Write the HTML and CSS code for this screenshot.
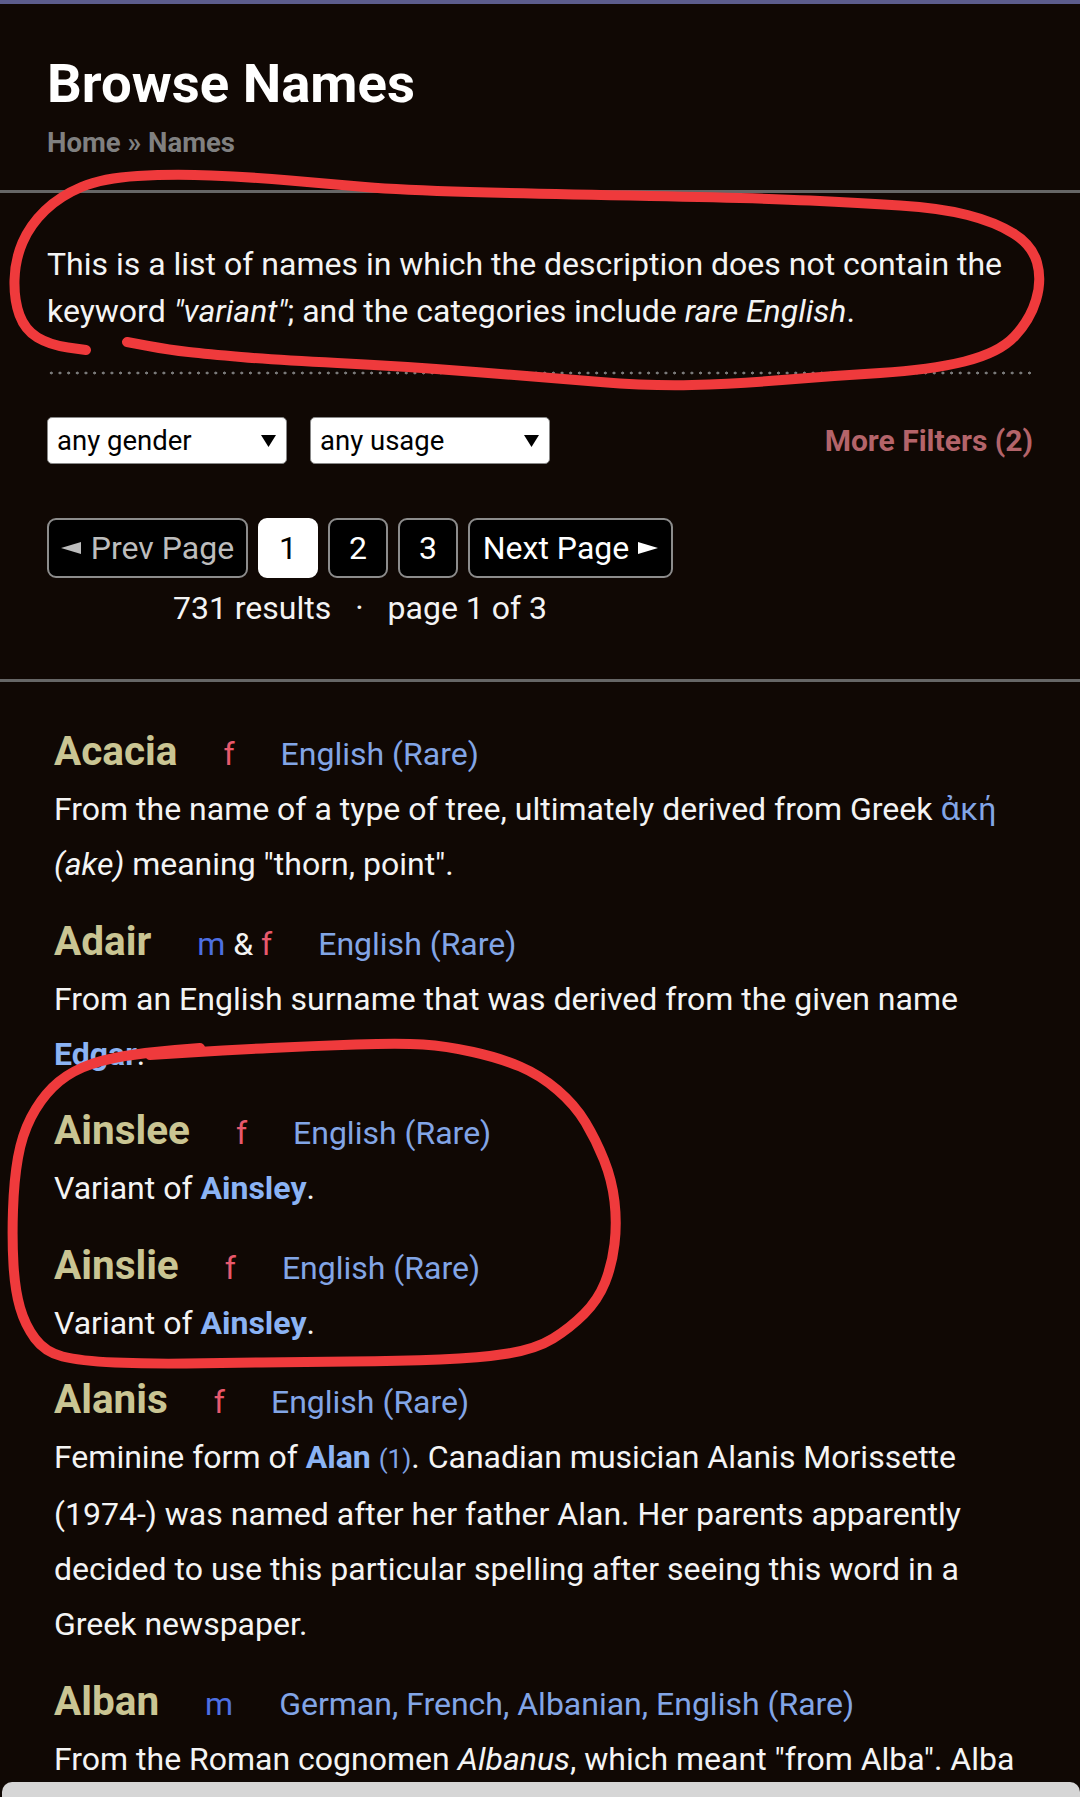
FILE: index.html
```html
<!DOCTYPE html>
<html lang="en">
<head>
<meta charset="utf-8">
<title>Browse Names</title>
<link rel="stylesheet" href="styles.css">
</head>
<body>
<div class="topbar"></div>
<header class="header">
  <h1 class="title">Browse Names</h1>
  <div class="crumbs"><span>Home</span> <span class="raquo">»</span> <span>Names</span></div>
</header>
<div class="rule"></div>

<section class="intro">
  <p class="intro-text">This is a list of names in which the description does not contain the keyword <i>"variant"</i>; and the categories include <i>rare English</i>.</p>
  <div class="dotted"></div>

  <div class="filters">
    <div class="select"><span>any gender</span><svg class="arrow" viewBox="0 0 15 12" width="15" height="12"><polygon points="0,0 15,0 7.5,12" fill="#000"/></svg></div>
    <div class="select"><span>any usage</span><svg class="arrow" viewBox="0 0 15 12" width="15" height="12"><polygon points="0,0 15,0 7.5,12" fill="#000"/></svg></div>
    <div class="more">More Filters (2)</div>
  </div>

  <div class="pager">
    <div class="pages">
      <div class="btn btn-prev"><svg viewBox="0 0 20 12" width="20" height="12"><polygon points="0,6 20,0 20,12" fill="currentColor"/></svg><span>Prev Page</span></div>
      <div class="btn btn-num current">1</div>
      <div class="btn btn-num">2</div>
      <div class="btn btn-num">3</div>
      <div class="btn btn-next"><span>Next Page</span><svg viewBox="0 0 20 12" width="20" height="12"><polygon points="0,0 20,6 0,12" fill="currentColor"/></svg></div>
    </div>
    <div class="results"><span>731 results</span><span class="dot">·</span><span>page 1 of 3</span></div>
  </div>
</section>
<div class="rule rule2"></div>

<main class="list">
  <div class="entry">
    <div class="name-row"><span class="name">Acacia</span><span class="tags"><span class="gender"><span class="f">f</span></span><span class="usage">English (Rare)</span></span></div>
    <div class="desc">From the name of a type of tree, ultimately derived from Greek <span class="greek">ἀκή</span> <i>(ake)</i> meaning "thorn, point".</div>
  </div>
  <div class="entry">
    <div class="name-row"><span class="name">Adair</span><span class="tags"><span class="gender"><span class="m">m</span> &amp; <span class="f">f</span></span><span class="usage">English (Rare)</span></span></div>
    <div class="desc">From an English surname that was derived from the given name <b class="link">Edgar</b>.</div>
  </div>
  <div class="entry">
    <div class="name-row"><span class="name">Ainslee</span><span class="tags"><span class="gender"><span class="f">f</span></span><span class="usage">English (Rare)</span></span></div>
    <div class="desc">Variant of <b class="link">Ainsley</b>.</div>
  </div>
  <div class="entry">
    <div class="name-row"><span class="name">Ainslie</span><span class="tags"><span class="gender"><span class="f">f</span></span><span class="usage">English (Rare)</span></span></div>
    <div class="desc">Variant of <b class="link">Ainsley</b>.</div>
  </div>
  <div class="entry">
    <div class="name-row"><span class="name">Alanis</span><span class="tags"><span class="gender"><span class="f">f</span></span><span class="usage">English (Rare)</span></span></div>
    <div class="desc">Feminine form of <b class="link">Alan</b> <span class="sup">(1)</span>. Canadian musician Alanis Morissette (1974-) was named after her father Alan. Her parents apparently decided to use this particular spelling after seeing this word in a Greek newspaper.</div>
  </div>
  <div class="entry">
    <div class="name-row"><span class="name">Alban</span><span class="tags"><span class="gender"><span class="m">m</span></span><span class="usage">German, French, Albanian, English (Rare)</span></span></div>
    <div class="desc">From the Roman cognomen <i>Albanus</i>, which meant "from Alba". Alba (from Latin <i>albus</i> "white") was the name of several places.</div>
  </div>
</main>

<svg class="marks" viewBox="0 0 1080 1797" width="1080" height="1797">
  <path d="M127,342 L148.5,346 Q170,350 188.5,352 Q207,354 241,357 Q275,360 337.5,363 Q400,366 475.5,372 Q551,378 600.5,382 Q650,386 692,385 Q734,384 782,380 Q830,376 880,373 Q930,370 964.5,361.5 Q999,353 1014.5,336.5 Q1030,320 1036,300 Q1042,280 1037,262.5 Q1032,245 1013.5,233.5 Q995,222 967.5,215 Q940,208 900,205.5 Q860,203 810,200.5 Q760,198 650,196 Q540,194 470,192 Q400,190 365,187 Q330,184 290,180.5 Q250,177 211,175.5 Q172,174 137.5,176 Q103,178 81.5,187 Q60,196 45,210.5 Q30,225 22.5,242.5 Q15,260 14.5,280 Q14,300 19.5,315 Q25,330 37.5,337.5 Q50,345 68,347.5 L86,350"/>
  <path d="M150,1055 L190,1052.5 Q230,1050 271,1048 Q312,1046 356,1044.5 Q400,1043 423,1044.5 Q446,1046 473,1052 Q500,1058 520,1066.5 Q540,1075 557.5,1090 Q575,1105 585.5,1122.5 Q596,1140 604,1160 Q612,1180 614.5,1201.5 Q617,1223 614.5,1244 Q612,1265 605,1282.5 Q598,1300 584,1314 Q570,1328 553,1338.5 Q536,1349 508,1353.5 Q480,1358 440,1359.5 Q400,1361 350,1361.5 Q300,1362 261.5,1362.5 Q223,1363 186.5,1363.5 Q150,1364 115,1362.5 Q80,1361 62.5,1356.5 Q45,1352 35,1338.5 Q25,1325 20,1307.5 Q15,1290 13.5,1265 Q12,1240 13,1210 Q14,1180 18,1157.5 Q22,1135 31,1117.5 Q40,1100 52.5,1087.5 Q65,1075 82.5,1067.5 Q100,1060 125,1056 Q150,1052 175,1050 L200,1048"/>
</svg>

<div class="navbar"></div>
</body>
</html>
```

FILE: styles.css
```css
html, body {
  margin: 0;
  padding: 0;
}

html {
  overflow: hidden;
}

body {
  position: relative;
  height: 1797px;
  overflow: hidden;
  background: #100804;
  color: #f4f4f4;
  font-family: Roboto, "Noto Sans", "DejaVu Sans", sans-serif;
}

.topbar {
  height: 4px;
  background: #5c5c8c;
}

.header {
  padding: 0 47px;
}

.title {
  margin: 47px 0 0;
  font-size: 54.5px;
  line-height: 64px;
  font-weight: 700;
  color: #ffffff;
}

.crumbs {
  margin-top: 10px;
  font-size: 27.5px;
  line-height: 36px;
  font-weight: 700;
  color: #808080;
}

.rule {
  height: 3px;
  background: #666666;
  margin-top: 29px;
}

.intro {
  padding: 0 47px;
}

.intro-text {
  margin: 48px 0 0;
  font-size: 32px;
  line-height: 47px;
}

.dotted {
  margin-top: 36px;
  height: 4px;
  background-image: radial-gradient(circle, #7a7a7a 1.3px, transparent 1.7px);
  background-size: 8.67px 4px;
  background-repeat: repeat-x;
}

.filters {
  margin-top: 42px;
  display: flex;
  align-items: center;
  gap: 23px;
}

.select {
  box-sizing: border-box;
  width: 240px;
  height: 47px;
  display: flex;
  align-items: center;
  justify-content: space-between;
  padding: 0 10px 0 9px;
  background: #ffffff;
  border: 1px solid #888888;
  border-radius: 5px;
  color: #000000;
  font-size: 27.5px;
}

.more {
  margin-left: auto;
  color: #b4646a;
  font-size: 30px;
  font-weight: 700;
}

.pager {
  margin-top: 54px;
  display: inline-flex;
  flex-direction: column;
  align-items: center;
}

.pages {
  display: flex;
  gap: 10px;
}

.btn {
  box-sizing: border-box;
  height: 60px;
  display: flex;
  align-items: center;
  justify-content: center;
  background: #000000;
  border: 2px solid #8c8c8c;
  border-radius: 9px;
  color: #ffffff;
  font-size: 32px;
}

.btn-num {
  width: 60px;
}

.btn.current {
  background: #ffffff;
  border-color: #ffffff;
  color: #000000;
}

.btn-prev {
  width: 201px;
  gap: 10px;
  color: #bdbdbd;
}

.btn-next {
  width: 205px;
  gap: 9px;
}

.results {
  margin-top: 10px;
  font-size: 32px;
  line-height: 40px;
}

.results .dot {
  margin: 0 24px;
}

.rule2 {
  margin-top: 51px;
}

.list {
  padding: 0 47px 0 54px;
  margin-top: 47px;
}

.entry {
  margin-bottom: 26.5px;
}

.name-row {
  line-height: 44px;
  white-space: nowrap;
}

.name {
  font-size: 40.5px;
  font-weight: 700;
  color: #cac593;
}

.tags {
  font-size: 32px;
  line-height: 1;
}

.gender {
  margin-left: 46px;
  color: #f4f4f4;
}

.f {
  color: #e8596c;
}

.m {
  color: #4d6fe2;
}

.usage {
  margin-left: 46px;
  color: #82a5e6;
}

.desc {
  font-size: 32px;
  line-height: 55px;
}

.link {
  color: #8bb3f4;
  font-weight: 700;
}

.greek {
  color: #82a5e6;
}

.sup {
  color: #82a5e6;
  font-size: 26px;
}

.marks {
  position: absolute;
  top: 0;
  left: 0;
  pointer-events: none;
  fill: none;
  stroke: #ef3a3c;
  stroke-width: 10;
  stroke-linecap: round;
  stroke-linejoin: round;
}

.navbar {
  position: absolute;
  left: 2px;
  right: 0;
  bottom: 0;
  height: 15px;
  background: #d6d6d6;
  border-radius: 10px 10px 0 0;
}
```
